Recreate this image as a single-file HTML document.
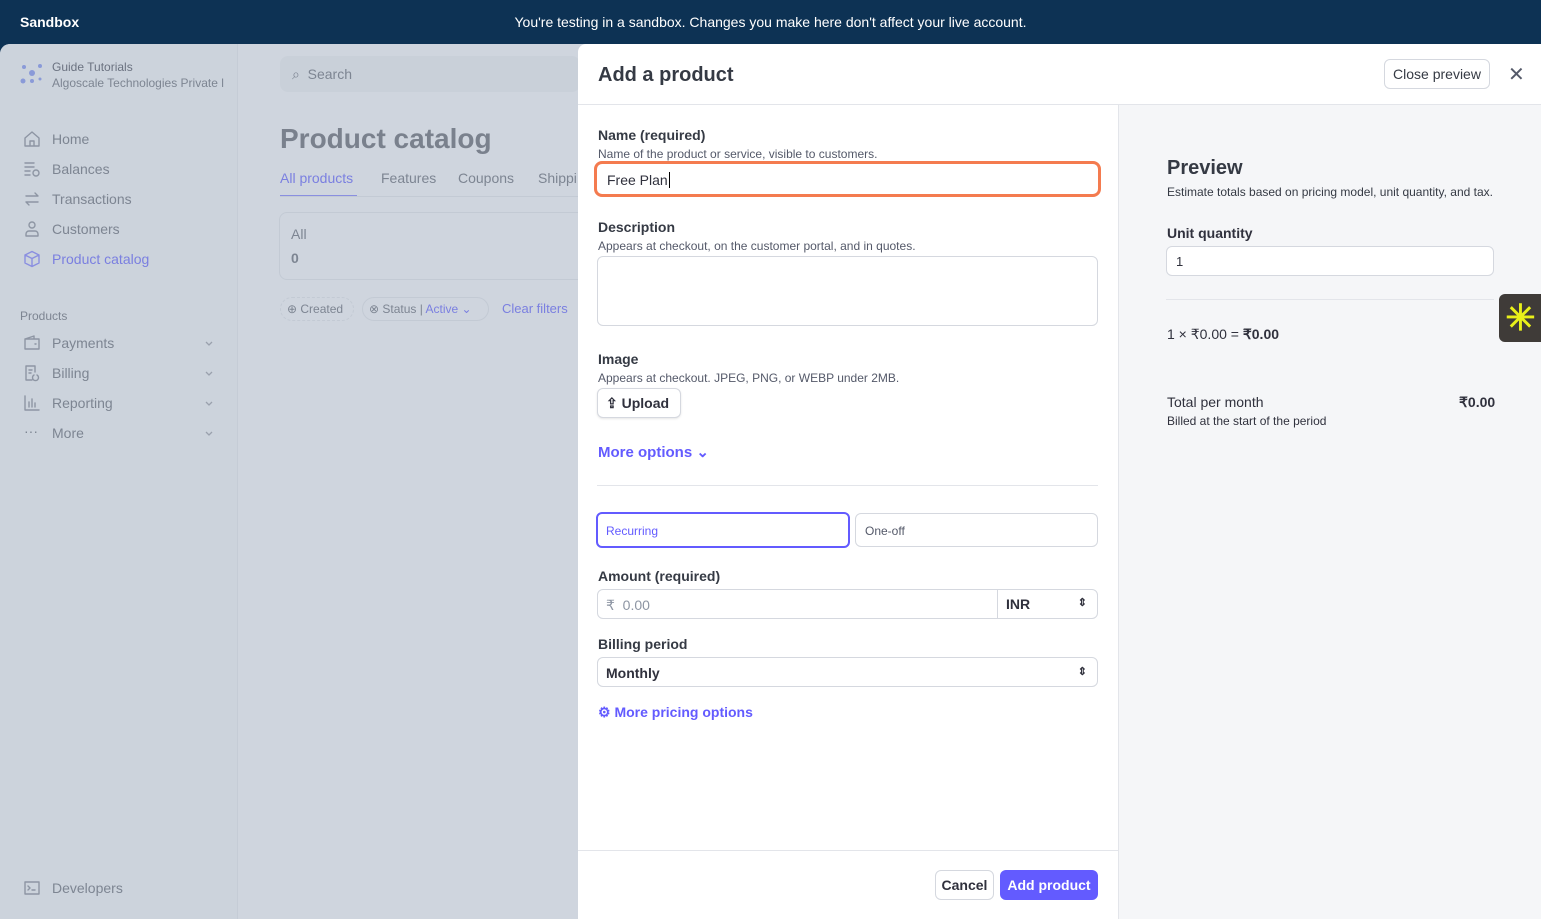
<!DOCTYPE html>
<html><head><meta charset="utf-8"><style>
*{box-sizing:border-box;margin:0;padding:0}
body{width:1541px;height:919px;overflow:hidden;font-family:"Liberation Sans",sans-serif;background:#0d3254;position:relative;color:#30313d}
.top{position:absolute;left:0;top:0;width:1541px;height:44px;background:#0d3254;color:#fff;font-size:14px}
.top b{position:absolute;left:20px;top:14px;font-size:14px}
.top span{position:absolute;left:0;width:1541px;text-align:center;top:14px}
.app{position:absolute;left:0;top:44px;width:1541px;height:875px;background:#cfd5de;border-radius:10px 10px 0 0;overflow:hidden}
.side{position:absolute;left:0;top:0;width:238px;height:875px;background:#ccd3dc;border-right:1px solid #c5ccd6}
.g{color:#7d8592;font-size:14px;position:absolute}
.si{position:absolute;left:23px;width:18px;height:18px;fill:none;stroke:#8d95a3;stroke-width:1.4;stroke-linecap:round;stroke-linejoin:round}
.chev{position:absolute;left:204px;width:10px;height:10px;fill:none;stroke:#9aa1ad;stroke-width:1.3}
.modal{position:absolute;left:578px;top:44px;width:963px;height:875px;background:#fff;border-radius:8px 0 0 0}
.hdr{height:61px;border-bottom:1px solid #e3e5ea;position:relative}
.lbl{position:absolute;left:20px;font-size:14px;color:#353a44;font-weight:bold}
.hint{position:absolute;left:20px;font-size:12px;color:#545969}
.inp{position:absolute;left:19px;width:501px;border:1px solid #d5d8df;border-radius:6px;background:#fff;font-size:14px}
.prev{position:absolute;left:540px;top:61px;width:423px;height:814px;background:#f5f6f8;border-left:1px solid #e3e5ea}
.blue{color:#635bff}
</style></head><body>
<div class="top"><b>Sandbox</b><span>You're testing in a sandbox. Changes you make here don't affect your live account.</span></div>
<div class="app">
 <div class="side">
  <svg style="position:absolute;left:20px;top:18px" width="24" height="24"><g fill="#8a9ad8"><circle cx="4" cy="5" r="2"/><circle cx="20" cy="4" r="2"/><circle cx="12" cy="11" r="3"/><circle cx="3" cy="19" r="2.5"/><circle cx="12" cy="19" r="2"/><circle cx="20" cy="17" r="1.5"/></g></svg>
  <div class="g" style="left:52px;top:16px;font-size:12px;color:#6b7280">Guide Tutorials</div>
  <div class="g" style="left:52px;top:32px;font-size:12px">Algoscale Technologies Private l</div>
  <svg class="si" style="top:86px" viewBox="0 0 18 18"><path d="M2 8L9 2l7 6v8H2z M7 16v-5h4v5"/></svg><div class="g" style="left:52px;top:87px">Home</div>
  <svg class="si" style="top:116px" viewBox="0 0 18 18"><path d="M2 3h9M2 7h9M2 11h5M2 15h5"/><circle cx="13" cy="13" r="3"/></svg><div class="g" style="left:52px;top:117px">Balances</div>
  <svg class="si" style="top:146px" viewBox="0 0 18 18"><path d="M3 6h12l-3-3M15 12H3l3 3"/></svg><div class="g" style="left:52px;top:147px">Transactions</div>
  <svg class="si" style="top:176px" viewBox="0 0 18 18"><circle cx="9" cy="5" r="3"/><path d="M3 16v-2a3 3 0 0 1 3-3h6a3 3 0 0 1 3 3v2z"/></svg><div class="g" style="left:52px;top:177px">Customers</div>
  <svg class="si" style="top:206px;stroke:#8a8fe0" viewBox="0 0 18 18"><path d="M9 1.5l7 3.5v8l-7 3.5-7-3.5V5z M2 5l7 3.5 7-3.5 M9 8.5v8"/></svg><div class="g" style="left:52px;top:207px;color:#7a7fe0">Product catalog</div>
  <div class="g" style="left:20px;top:265px;font-size:12px">Products</div>
  <svg class="si" style="top:290px" viewBox="0 0 18 18"><path d="M2 5h14v10H2z M2 5l9-3v3 M12 10h1"/></svg><div class="g" style="left:52px;top:291px">Payments</div><svg class="chev" style="top:295px"><path d="M2 3l3 3 3-3"/></svg>
  <svg class="si" style="top:320px" viewBox="0 0 18 18"><path d="M9 16H3V2h9v6 M6 6h3M6 9h2 M11 11a3 3 0 1 0 3-0"/></svg><div class="g" style="left:52px;top:321px">Billing</div><svg class="chev" style="top:325px"><path d="M2 3l3 3 3-3"/></svg>
  <svg class="si" style="top:350px" viewBox="0 0 18 18"><path d="M2 2v14h14 M6 13V8 M9 13V5 M12 13V9"/></svg><div class="g" style="left:52px;top:351px">Reporting</div><svg class="chev" style="top:355px"><path d="M2 3l3 3 3-3"/></svg>
  <div class="g" style="left:24px;top:379px">···</div><div class="g" style="left:52px;top:381px">More</div><svg class="chev" style="top:385px"><path d="M2 3l3 3 3-3"/></svg>
  <svg class="si" style="top:835px" viewBox="0 0 18 18"><path d="M2 3h14v12H2z M5 7l2 2-2 2 M9 11h3"/></svg><div class="g" style="left:52px;top:836px">Developers</div>
 </div>
 <div style="position:absolute;left:280px;top:12px;width:300px;height:36px;background:#c9d0d9;border-radius:8px"></div>
 <div class="g" style="left:292px;top:22px">⌕&nbsp; Search</div>
 <div class="g" style="left:280px;top:79px;font-size:28px;font-weight:bold;color:#7a818d">Product catalog</div>
 <div class="g" style="left:280px;top:126px;color:#7a7fe0">All products</div>
 <div style="position:absolute;left:280px;top:151px;width:77px;height:2px;background:#8a8fe0"></div>
 <div style="position:absolute;left:280px;top:152px;width:300px;height:1px;background:#c3cad4"></div>
 <div class="g" style="left:381px;top:126px">Features</div><div class="g" style="left:458px;top:126px">Coupons</div><div class="g" style="left:538px;top:126px">Shippi</div>
 <div style="position:absolute;left:279px;top:168px;width:320px;height:68px;border:1px solid #c3cad4;border-radius:8px"></div>
 <div class="g" style="left:291px;top:182px">All</div><div class="g" style="left:291px;top:206px;font-weight:bold">0</div>
 <div style="position:absolute;left:280px;top:253px;width:74px;height:24px;border:1px dashed #c3cad4;border-radius:12px"></div>
 <div class="g" style="left:287px;top:258px;font-size:12px">⊕ Created</div>
 <div style="position:absolute;left:362px;top:253px;width:127px;height:24px;border:1px solid #c3cad4;border-radius:12px"></div>
 <div class="g" style="left:369px;top:258px;font-size:12px">⊗ Status | <span style="color:#7a7fe0">Active ⌄</span></div>
 <div class="g" style="left:502px;top:257px;font-size:13px;color:#7a7fe0">Clear filters</div>
</div>
<div class="modal">
 <div class="hdr">
  <div style="position:absolute;left:20px;top:20px;font-size:20px;font-weight:bold;color:#353a44">Add a product</div>
  <div style="position:absolute;left:806px;top:15px;width:106px;height:30px;border:1px solid #d5d8df;border-radius:6px;font-size:14px;text-align:center;line-height:28px;color:#353a44">Close preview</div>
  <div style="position:absolute;left:930px;top:18px;font-size:20px;color:#545969">✕</div>
 </div>
 <div class="lbl" style="top:83px">Name (required)</div>
 <div class="hint" style="top:103px">Name of the product or service, visible to customers.</div>
 <div class="inp" style="top:117px;left:16px;width:507px;height:36px;border:3px solid #f47b4f;border-radius:8px;padding:8px 10px;line-height:16px">Free Plan<span style="border-left:1px solid #000;margin-left:1px"></span></div>
 <div class="lbl" style="top:175px">Description</div>
 <div class="hint" style="top:195px">Appears at checkout, on the customer portal, and in quotes.</div>
 <div class="inp" style="top:212px;height:70px"></div>
 <div class="lbl" style="top:307px">Image</div>
 <div class="hint" style="top:327px">Appears at checkout. JPEG, PNG, or WEBP under 2MB.</div>
 <div class="inp" style="top:344px;width:84px;height:30px;padding:6px 8px;font-weight:bold;box-shadow:0 1px 2px rgba(0,0,0,.1)">⇪ Upload</div>
 <div class="blue" style="position:absolute;left:20px;top:399px;font-size:15px;font-weight:bold">More options ⌄</div>
 <div style="position:absolute;left:19px;top:441px;width:501px;height:1px;background:#e3e5ea"></div>
 <div style="position:absolute;left:18px;top:468px;width:254px;height:36px;border:2px solid #635bff;border-radius:6px;font-size:12px;color:#635bff;padding:10px 8px">Recurring</div>
 <div style="position:absolute;left:277px;top:469px;width:243px;height:34px;border:1px solid #d5d8df;border-radius:6px;font-size:12px;color:#545969;padding:10px 9px">One-off</div>
 <div class="lbl" style="top:524px">Amount (required)</div>
 <div class="inp" style="top:545px;height:30px;padding:7px 8px;color:#8d95a3">₹&nbsp; 0.00</div>
 <div style="position:absolute;left:419px;top:546px;width:100px;height:28px;border-left:1px solid #d5d8df;font-size:14px;font-weight:bold;padding:6px 8px">INR<span style="position:absolute;right:10px;font-size:11px">⇕</span></div>
 <div class="lbl" style="top:592px">Billing period</div>
 <div class="inp" style="top:613px;height:30px;padding:7px 8px;font-weight:bold">Monthly<span style="position:absolute;right:10px;font-size:11px">⇕</span></div>
 <div class="blue" style="position:absolute;left:20px;top:660px;font-size:14px;font-weight:bold">⚙ More pricing options</div>
 <div style="position:absolute;left:0;top:806px;width:540px;height:1px;background:#e3e5ea"></div>
 <div style="position:absolute;left:357px;top:826px;width:59px;height:30px;border:1px solid #d5d8df;border-radius:6px;font-size:14px;font-weight:bold;text-align:center;line-height:28px">Cancel</div>
 <div style="position:absolute;left:422px;top:826px;width:98px;height:30px;background:#635bff;border-radius:6px;font-size:14px;font-weight:bold;color:#fff;text-align:center;line-height:30px">Add product</div>
 <div class="prev">
  <div style="position:absolute;left:48px;top:52px;font-size:20px;font-weight:bold;color:#353a44">Preview</div>
  <div style="position:absolute;left:48px;top:80px;font-size:12px;color:#353a44">Estimate totals based on pricing model, unit quantity, and tax.</div>
  <div style="position:absolute;left:48px;top:120px;font-size:14px;font-weight:bold">Unit quantity</div>
  <div style="position:absolute;left:47px;top:141px;width:328px;height:30px;background:#fff;border:1px solid #d5d8df;border-radius:6px;font-size:13px;padding:7px 9px">1</div>
  <div style="position:absolute;left:47px;top:194px;width:328px;height:1px;background:#e3e5ea"></div>
  <div style="position:absolute;left:48px;top:221px;font-size:14px">1 × ₹0.00 = <b>₹0.00</b></div>
  <div style="position:absolute;left:48px;top:289px;font-size:14px">Total per month</div>
  <div style="position:absolute;left:340px;top:289px;font-size:14px;font-weight:bold">₹0.00</div>
  <div style="position:absolute;left:48px;top:309px;font-size:12px">Billed at the start of the period</div>
  <div style="position:absolute;left:380px;top:189px;width:43px;height:48px;background:#3f3b38;border-radius:6px 0 0 6px;color:#e8f01a;font-size:36px;line-height:48px;text-align:center;font-weight:bold">✳</div>
 </div>
</div>
</body></html>
